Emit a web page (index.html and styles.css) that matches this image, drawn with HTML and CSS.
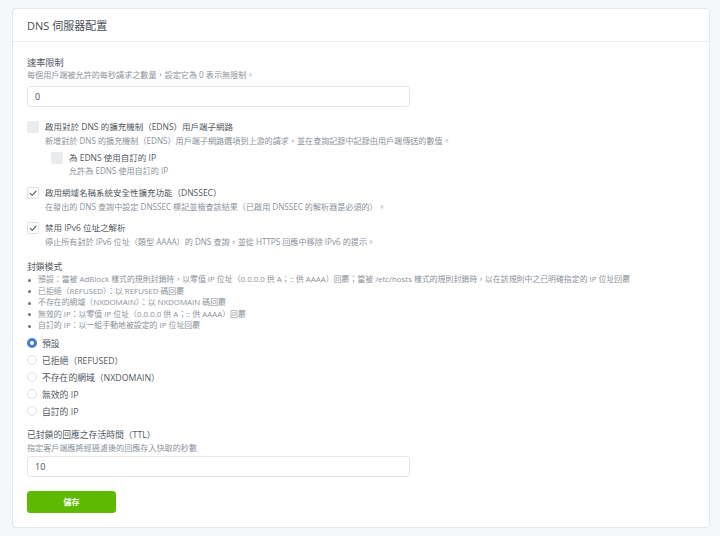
FILE: index.html
```html
<!DOCTYPE html>
<html lang="zh-Hant">
<head>
	<meta charset="UTF-8">
	<title>DNS 伺服器配置</title>
<link rel="stylesheet" href="styles.css">
</head>
<body>
	<div class='page'>
		<div class='card'>
			<div class='card-hd'>DNS 伺服器配置</div>
			<div class='card-bd'>

				<div class='field'>
					<div class='label'>速率限制</div>
					<div class='desc'>每個用戶端被允許的每秒請求之數量，設定它為 0 表示無限制。</div>
					<div class='input'>0</div>
				</div>

				<div class='check check-edns'>
					<span class='box'></span>
					<div class='check-text'>
						<div class='label'>啟用對於 DNS 的擴充機制（EDNS）用戶端子網路</div>
						<div class='desc'>新增對於 DNS 的擴充機制（EDNS）用戶端子網路選項到上游的請求，並在查詢記錄中記錄由用戶端傳送的數值。</div>
					</div>
				</div>

				<div class='check check-sub'>
					<span class='box'></span>
					<div class='check-text'>
						<div class='label'>為 EDNS 使用自訂的 IP</div>
						<div class='desc'>允許為 EDNS 使用自訂的 IP</div>
					</div>
				</div>

				<div class='check check-dnssec'>
					<span class='box on'>
						<svg viewBox='0 0 12 12' width='12' height='12'><path d='M3 6.2 L5.2 8.3 L9.2 3.8' fill='none' stroke='#495057' stroke-width='1.1'/></svg>
					</span>
					<div class='check-text'>
						<div class='label'>啟用網域名稱系統安全性擴充功能（DNSSEC）</div>
						<div class='desc'>在發出的 DNS 查詢中設定 DNSSEC 標記並檢查該結果（已啟用 DNSSEC 的解析器是必須的）。</div>
					</div>
				</div>

				<div class='check check-ipv6'>
					<span class='box on'>
						<svg viewBox='0 0 12 12' width='12' height='12'><path d='M3 6.2 L5.2 8.3 L9.2 3.8' fill='none' stroke='#495057' stroke-width='1.1'/></svg>
					</span>
					<div class='check-text'>
						<div class='label'>禁用 IPv6 位址之解析</div>
						<div class='desc'>停止所有對於 IPv6 位址（類型 AAAA）的 DNS 查詢，並從 HTTPS 回應中移除 IPv6 的提示。</div>
					</div>
				</div>

				<div class='block-mode'>
					<div class='label'>封鎖模式</div>
					<ul class='modes'>
						<li>預設：當被 AdBlock 樣式的規則封鎖時，以零值 IP 位址（0.0.0.0 供 A；:: 供 AAAA）回覆；當被 /etc/hosts 樣式的規則封鎖時，以在該規則中之已明確指定的 IP 位址回覆</li>
						<li>已拒絕（REFUSED）：以 REFUSED 碼回覆</li>
						<li>不存在的網域（NXDOMAIN）：以 NXDOMAIN 碼回覆</li>
						<li>無效的 IP：以零值 IP 位址（0.0.0.0 供 A；:: 供 AAAA）回覆</li>
						<li>自訂的 IP：以一組手動地被設定的 IP 位址回覆</li>
					</ul>
					<div class='radios'>
						<div class='radio'><span class='dot on'></span>預設</div>
						<div class='radio'><span class='dot'></span>已拒絕（REFUSED）</div>
						<div class='radio'><span class='dot'></span>不存在的網域（NXDOMAIN）</div>
						<div class='radio'><span class='dot'></span>無效的 IP</div>
						<div class='radio'><span class='dot'></span>自訂的 IP</div>
					</div>
				</div>

				<div class='field field-ttl'>
					<div class='label'>已封鎖的回應之存活時間（TTL）</div>
					<div class='desc'>指定客戶端應將經過濾後的回應存入快取的秒數</div>
					<div class='input'>10</div>
				</div>

				<button class='btn-save'>儲存</button>
			</div>
		</div>
	</div>
</body>
</html>
```

FILE: styles.css
```css
*{
	box-sizing: border-box;
}
body{
	margin: 0;
	background-color: #f5f7fb;
	font-family: "Open Sans", "Noto Sans CJK TC", sans-serif;
	color: #495057;
}
.page{
	padding: 8px 10px 8px 12px;
}
.card{
	width: 698px;
	background-color: #fff;
	border: 1px solid #e3e7ee;
	border-radius: 3px;
}
.card-hd{
	height: 33px;
	line-height: 33px;
	padding: 0 14px;
	font-size: 11px;
	border-bottom: 1px solid #e9ecf1;
}
.card-bd{
	display: flex;
	flex-direction: column;
	align-items: flex-start;
	padding: 14px 14px 14px;
}
.label{
	font-size: 8.5px;
	line-height: 15px;
	color: #50575e;
}
.desc{
	font-size: 8.1px;
	line-height: 13px;
	color: #8a929b;
}
.field{
	width: 383px;
}
.field .label{
	font-size: 9.2px;
	line-height: 13px;
}
.field .desc{
	line-height: 12px;
}
.input{
	margin-top: 5px;
	height: 21px;
	line-height: 19px;
	padding: 0 7px;
	font-size: 9px;
	border: 1px solid #e3e7ee;
	border-radius: 3px;
}

/* 勾選框 */
.check{
	display: flex;
	align-items: flex-start;
	gap: 6px;
}
.box{
	flex: none;
	width: 12px;
	height: 12px;
	margin-top: 2px;
	border-radius: 2px;
	background-color: #e9ecef;
}
.box.on{
	background-color: #fff;
	border: 1px solid #dde2e8;
}
.box.on svg{
	display: block;
	margin: -1px;
}
.check-edns{
	margin-top: 12px;
}
.check-sub{
	margin-top: 4px;
	margin-left: 24px;
}
.check-sub .label,
.check-sub .desc{
	line-height: 13px;
}
.check-sub .box{
	margin-top: 1px;
}
.check-dnssec{
	margin-top: 8px;
}
.check-ipv6{
	margin-top: 7px;
}

/* 封鎖模式 */
.block-mode{
	margin-top: 13px;
}
.block-mode .label{
	font-size: 8.8px;
	line-height: 13px;
}
.modes{
	margin: 0;
	padding: 0;
	list-style: none;
	font-size: 7.9px;
	line-height: 11.6px;
	color: #8a929b;
}
.modes li{
	position: relative;
	padding-left: 11px;
}
.modes li::before{
	content: '';
	position: absolute;
	left: 1px;
	top: 4.5px;
	width: 3px;
	height: 3px;
	border-radius: 50%;
	background-color: #6e757d;
}
.radios{
	margin-top: 3px;
}
.radio{
	display: flex;
	align-items: center;
	gap: 5px;
	height: 17px;
	font-size: 8.8px;
	color: #50575e;
}
.dot{
	width: 10px;
	height: 10px;
	border-radius: 50%;
	border: 1px solid #dde2e8;
	background-color: #fff;
}
.dot.on{
	border: 3px solid #467fcf;
}

.field-ttl{
	margin-top: 8px;
}
.field-ttl .label{
	font-size: 8.8px;
	line-height: 14px;
}
.field-ttl .desc{
	line-height: 11px;
}
.field-ttl .input{
	margin-top: 3px;
}
.btn-save{
	margin-top: 14px;
	width: 89px;
	height: 22px;
	padding: 0;
	border: 1px solid #5eba00;
	border-radius: 3px;
	background-color: #5eba00;
	color: #fff;
	font-family: inherit;
	font-size: 8px;
	font-weight: 600;
	cursor: pointer;
}
```
